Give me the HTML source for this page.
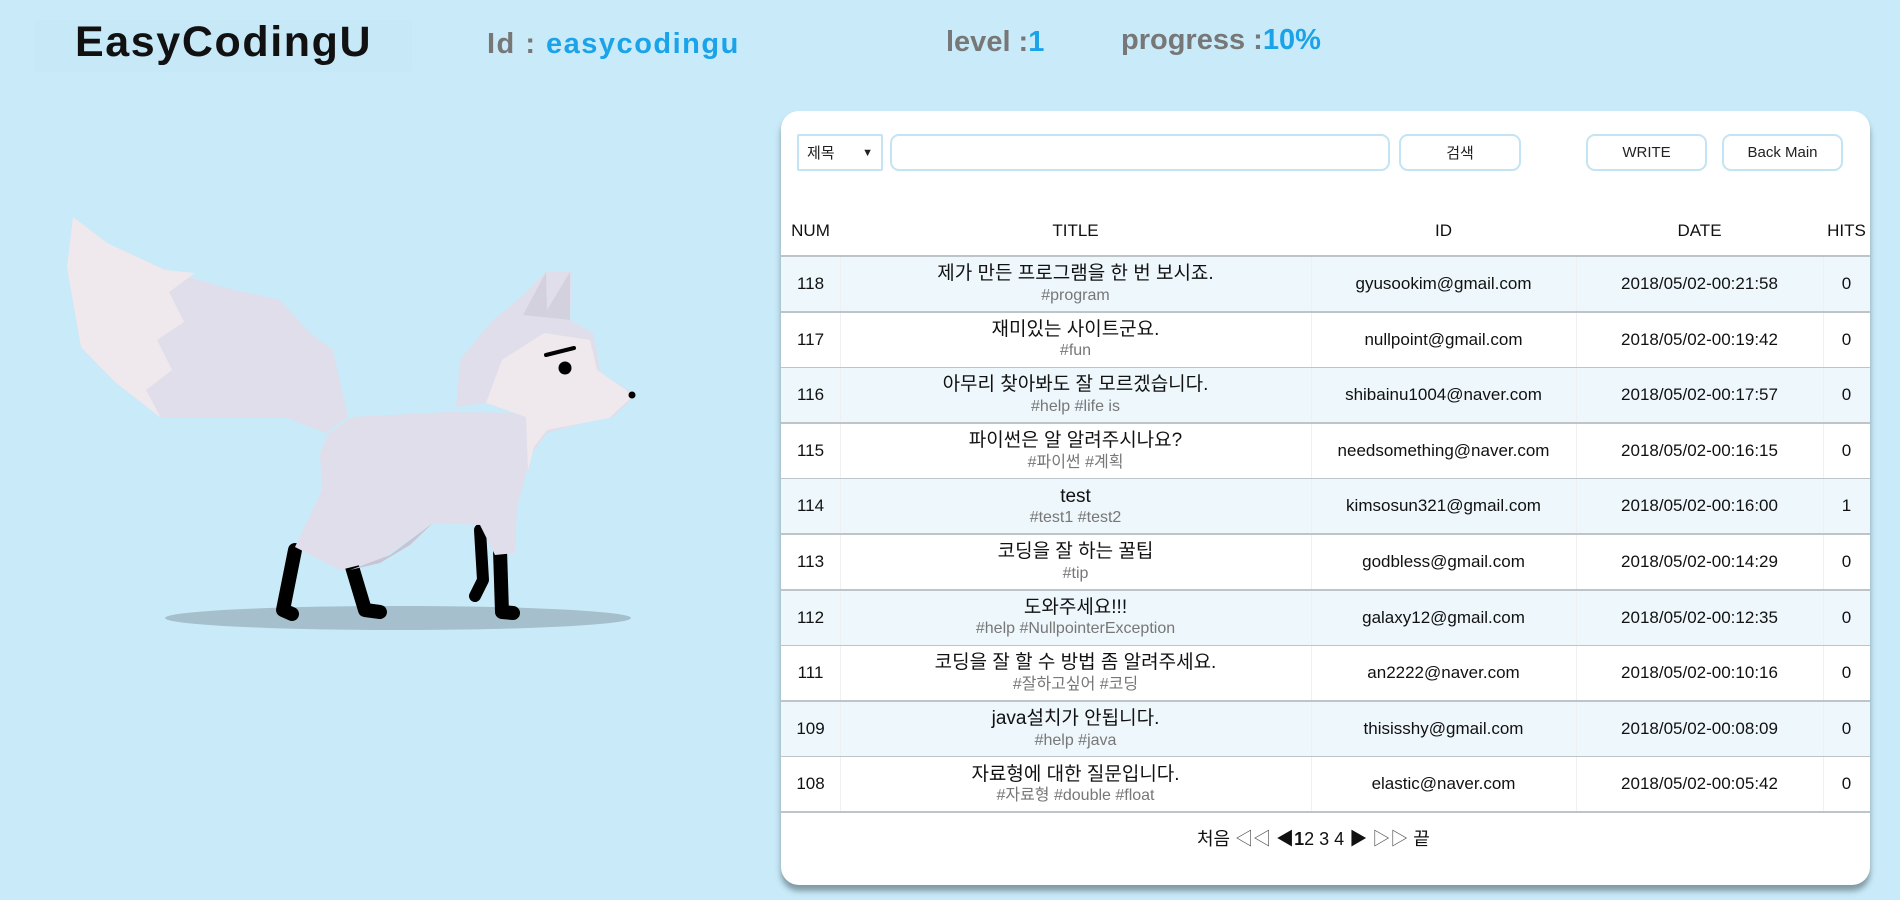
<!DOCTYPE html>
<html><head><meta charset="utf-8"><style>
*{margin:0;padding:0;box-sizing:border-box}
body{width:1900px;height:900px;background:#c9eaf8;font-family:"Liberation Sans","Noto Sans CJK KR",sans-serif;position:relative;overflow:hidden;color:#111}
.a{position:absolute;white-space:nowrap}
.logo{left:34px;top:20px;width:378px;height:52px;background:#c7e8f7;border-radius:4px}
.card{left:781px;top:111px;width:1089px;height:774px;background:#fff;border-radius:18px;box-shadow:0 6px 6px rgba(80,100,110,.6)}
.box{position:absolute;border:2px solid #c2e4f4;border-radius:9px;background:#fff;font-size:15px;display:flex;align-items:center;justify-content:center;color:#222}
.row{position:absolute;left:0;width:1089px;height:56px;border-bottom:2px solid #bfc4c8}
.c{position:absolute;top:0;height:54px;display:flex;align-items:center;justify-content:center;font-size:17px}
.t{flex-direction:column;line-height:1.25}
.t span{font-size:19px}
.t i{font-style:normal;font-size:16px;color:#777}
.vl{position:absolute;top:0;width:1px;height:54px;background:#eef0f2}
</style></head><body>
<div class="a logo"></div>
<div class="a" style="left:75px;top:18px;font-size:43px;font-weight:bold;letter-spacing:1.6px">EasyCodingU</div>
<div class="a" style="left:487px;top:28px;font-size:29px;font-weight:bold;color:#777;letter-spacing:1.5px">Id : <span style="color:#1aa3e8">easycodingu</span></div>
<div class="a" style="left:946px;top:26px;font-size:29px;font-weight:bold;color:#777">level :<span style="color:#1aa3e8">1</span></div>
<div class="a" style="left:1121px;top:24px;font-size:29px;font-weight:bold;color:#777">progress :<span style="color:#1aa3e8">10%</span></div>

<svg class="a" style="left:50px;top:200px" width="600" height="450" viewBox="0 0 600 450">
<ellipse cx="348" cy="418" rx="233" ry="12" fill="#a5bfcc"/>
<path d="M23 17 L57 43 L115 70 L176 88 L230 100 L260 133 L283 150 L298 217 L276 233 L237 218 L111 218 L65 182 L31 147 L17 67 Z" fill="#e0deea"/>
<path d="M23 17 L57 43 L115 70 L145 73 L119 92 L134 122 L107 140 L122 170 L96 190 L111 218 L65 182 L31 147 L17 67 Z" fill="#efe9ee"/>
<path d="M245 350 L233 410 L242 414" stroke="#000" stroke-width="14" fill="none" stroke-linecap="round" stroke-linejoin="round"/>
<path d="M300 360 L315 410 L330 412" stroke="#000" stroke-width="14" fill="none" stroke-linecap="round" stroke-linejoin="round"/>
<path d="M430 330 L433 380 L425 396" stroke="#000" stroke-width="12" fill="none" stroke-linecap="round" stroke-linejoin="round"/>
<path d="M450 350 L452 412 L463 413" stroke="#000" stroke-width="14" fill="none" stroke-linecap="round" stroke-linejoin="round"/>
<path d="M302 217 L398 212 L478 213 L478 267 L467 307 L465 353 L445 355 L430 325 L383 323 L330 360 L290 370 L245 347 L272 290 L270 253 L279 233 Z" fill="#e0deea"/>
<path d="M383 323 L340 355 L300 370 L330 363 L360 345 Z" fill="#c8c4d4"/>
<path d="M406 207 L410 160 L440 123 L471 97 L496 72 L522 72 L520 120 L543 133 L551 173 L578 190 L584 197 L563 217 L536 222 L497 233 L482 253 L478 273 L476 217 L436 203 Z" fill="#e0deea"/>
<path d="M473 115 L496 72 L497 110 L520 72 L520 120 Z" fill="#d3d1de"/>
<path d="M436 203 L452 160 L494 133 L540 140 L547 170 L576 190 L582 197 L559 218 L497 230 L484 247 L478 270 L476 217 Z" fill="#efe9ee"/>
<circle cx="515" cy="168" r="6.5" fill="#000"/>
<path d="M496 155 L524 148" stroke="#000" stroke-width="4" stroke-linecap="round"/>
<circle cx="582" cy="195" r="3.5" fill="#000"/>
</svg>

<div class="a card">
<div class="box" style="left:16px;top:23px;width:86px;height:37px;border-radius:2px;justify-content:space-between;padding:0 8px">제목<span style="font-size:11px">▼</span></div>
<div class="box" style="left:109px;top:23px;width:500px;height:37px"></div>
<div class="box" style="left:618px;top:23px;width:122px;height:37px">검색</div>
<div class="box" style="left:805px;top:23px;width:121px;height:37px">WRITE</div>
<div class="box" style="left:941px;top:23px;width:121px;height:37px">Back Main</div>
<div class="c" style="left:0;width:59px;top:93px;height:54px">NUM</div>
<div class="c" style="left:59px;width:471px;top:93px;height:54px">TITLE</div>
<div class="c" style="left:530px;width:265px;top:93px;height:54px">ID</div>
<div class="c" style="left:795px;width:247px;top:93px;height:54px">DATE</div>
<div class="c" style="left:1042px;width:47px;top:93px;height:54px">HITS</div>
<div style="position:absolute;left:0;top:144px;width:1089px;height:2px;background:#bfc4c8"></div>
<div id="rows"></div>
<div class="a" style="left:416px;top:714px;font-size:18px;color:#111">처음 <span style="color:#555">◁◁</span> ◀<b>1</b>2 3 4 ▶ <span style="color:#555">▷▷</span> 끝</div>
</div>
<script>
var d=[["118","제가 만든 프로그램을 한 번 보시죠.","#program","gyusookim@gmail.com","2018/05/02-00:21:58","0"],
["117","재미있는 사이트군요.","#fun","nullpoint@gmail.com","2018/05/02-00:19:42","0"],
["116","아무리 찾아봐도 잘 모르겠습니다.","#help #life is","shibainu1004@naver.com","2018/05/02-00:17:57","0"],
["115","파이썬은 알 알려주시나요?","#파이썬 #계획","needsomething@naver.com","2018/05/02-00:16:15","0"],
["114","test","#test1 #test2","kimsosun321@gmail.com","2018/05/02-00:16:00","1"],
["113","코딩을 잘 하는 꿀팁","#tip","godbless@gmail.com","2018/05/02-00:14:29","0"],
["112","도와주세요!!!","#help #NullpointerException","galaxy12@gmail.com","2018/05/02-00:12:35","0"],
["111","코딩을 잘 할 수 방법 좀 알려주세요.","#잘하고싶어 #코딩","an2222@naver.com","2018/05/02-00:10:16","0"],
["109","java설치가 안됩니다.","#help #java","thisisshy@gmail.com","2018/05/02-00:08:09","0"],
["108","자료형에 대한 질문입니다.","#자료형 #double #float","elastic@naver.com","2018/05/02-00:05:42","0"]];
var h="";
d.forEach(function(r,i){
h+='<div class="row" style="top:'+(146+i*55.6)+'px;background:'+(i%2?'#fff':'#eef7fc')+'">'+
'<div class="c" style="left:0;width:59px">'+r[0]+'</div>'+
'<div class="c t" style="left:59px;width:471px"><span>'+r[1]+'</span><i>'+r[2]+'</i></div>'+
'<div class="c" style="left:530px;width:265px">'+r[3]+'</div>'+
'<div class="c" style="left:795px;width:247px">'+r[4]+'</div>'+
'<div class="c" style="left:1042px;width:47px">'+r[5]+'</div>'+
'<div class="vl" style="left:59px"></div><div class="vl" style="left:530px"></div><div class="vl" style="left:795px"></div><div class="vl" style="left:1042px"></div></div>';});
document.getElementById("rows").innerHTML=h;
</script>
</body></html>
